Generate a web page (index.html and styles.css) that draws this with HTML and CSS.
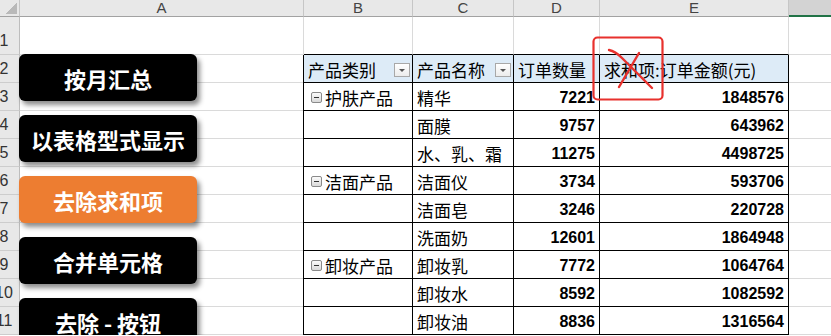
FILE: index.html
```html
<!DOCTYPE html>
<html lang="zh-CN">
<head>
<meta charset="utf-8">
<title>数据透视表</title>
<link rel="stylesheet" href="styles.css">
</head>
<body>
<div class="sheet">
  <!-- column headers -->
  <div class="ch corner"></div>
  <div class="ch">A</div>
  <div class="ch">B</div>
  <div class="ch">C</div>
  <div class="ch">D</div>
  <div class="ch">E</div>
  <div class="ch sel"></div>

  <!-- row 1 -->
  <div class="rh">1</div>
  <div class="c"></div>
  <div class="c tt"></div>
  <div class="c tt"></div>
  <div class="c tt"></div>
  <div class="c tt"></div>
  <div class="c"></div>

  <!-- button stack over column A, rows 2-11 -->
  <div class="btns">
    <div class="btn">按月汇总</div>
    <div class="btn">以表格型式显示</div>
    <div class="btn orange">去除求和项</div>
    <div class="btn">合并单元格</div>
    <div class="btn">去除 - 按钮</div>
  </div>

  <!-- row 2 : pivot header -->
  <div class="rh">2</div>
  <div class="t hd drop"><span>产品类别</span><span class="dd"></span></div>
  <div class="t hd drop"><span>产品名称</span><span class="dd"></span></div>
  <div class="t hd">订单数量</div>
  <div class="t hd mark-cell">求和项:订单金额(元)
    <svg class="mark" width="72" height="66" viewBox="0 0 72 66">
      <rect x="1.5" y="1.5" width="69" height="62" rx="4" fill="none" stroke="#e8312d" stroke-width="2.2"/>
      <path d="M17 14 C22 15 26 18 30 22 L60 52" fill="none" stroke="#e8312d" stroke-width="2.4" stroke-linecap="round"/>
      <path d="M47 17 L27 51" fill="none" stroke="#e8312d" stroke-width="2.4" stroke-linecap="round"/>
    </svg>
  </div>
  <div class="c"></div>

  <!-- row 3 -->
  <div class="rh">3</div>
  <div class="t grp"><span class="mb"></span>护肤产品</div>
  <div class="t">精华</div>
  <div class="t num">7221</div>
  <div class="t num">1848576</div>
  <div class="c"></div>

  <!-- row 4 -->
  <div class="rh">4</div>
  <div class="t"></div>
  <div class="t">面膜</div>
  <div class="t num">9757</div>
  <div class="t num">643962</div>
  <div class="c"></div>

  <!-- row 5 -->
  <div class="rh">5</div>
  <div class="t"></div>
  <div class="t">水、乳、霜</div>
  <div class="t num">11275</div>
  <div class="t num">4498725</div>
  <div class="c"></div>

  <!-- row 6 -->
  <div class="rh">6</div>
  <div class="t grp"><span class="mb"></span>洁面产品</div>
  <div class="t">洁面仪</div>
  <div class="t num">3734</div>
  <div class="t num">593706</div>
  <div class="c"></div>

  <!-- row 7 -->
  <div class="rh">7</div>
  <div class="t"></div>
  <div class="t">洁面皂</div>
  <div class="t num">3246</div>
  <div class="t num">220728</div>
  <div class="c"></div>

  <!-- row 8 -->
  <div class="rh">8</div>
  <div class="t"></div>
  <div class="t">洗面奶</div>
  <div class="t num">12601</div>
  <div class="t num">1864948</div>
  <div class="c"></div>

  <!-- row 9 -->
  <div class="rh">9</div>
  <div class="t grp"><span class="mb"></span>卸妆产品</div>
  <div class="t">卸妆乳</div>
  <div class="t num">7772</div>
  <div class="t num">1064764</div>
  <div class="c"></div>

  <!-- row 10 -->
  <div class="rh">10</div>
  <div class="t"></div>
  <div class="t">卸妆水</div>
  <div class="t num">8592</div>
  <div class="t num">1082592</div>
  <div class="c"></div>

  <!-- row 11 -->
  <div class="rh">11</div>
  <div class="t"></div>
  <div class="t">卸妆油</div>
  <div class="t num">8836</div>
  <div class="t num">1316564</div>
  <div class="c"></div>
</div>
</body>
</html>
```

FILE: styles.css
```css
html, body {
  margin: 0;
  padding: 0;
  overflow: hidden;
  background: #fff;
}

* { box-sizing: border-box; }

.sheet {
  display: grid;
  grid-template-columns: 31px 284px 109px 101px 86px 189px 80px;
  grid-template-rows: 17px 38px repeat(10, 28px);
  margin-left: -11px;
  font-family: "Noto Sans CJK SC", "Noto Sans", sans-serif;
  color: #000;
}

/* column headers */
.ch {
  background: #e8e8e8;
  border-right: 1px solid #c6c6c6;
  border-bottom: 1px solid #a2a2a2;
  display: flex;
  align-items: center;
  justify-content: center;
  font: 15px/16px "Liberation Sans", sans-serif;
  color: #444;
}

.ch.corner {
  background: linear-gradient(to top left, #b9b9b9 50%, transparent 50%) right 2px bottom 2px / 12px 12px no-repeat, #e8e8e8;
}

.ch.sel {
  background: #d3d3d3;
  border-bottom: 2px solid #217346;
}

/* row headers */
.rh {
  background: #e8e8e8;
  border-right: 1px solid #bdbdbd;
  border-bottom: 1px solid #cdcdcd;
  display: flex;
  align-items: flex-end;
  justify-content: center;
  padding-bottom: 4px;
  font: 16px/18px "Liberation Sans", sans-serif;
  color: #333;
}

/* plain worksheet cells */
.c {
  border-right: 1px solid #dadada;
  border-bottom: 1px solid #dadada;
}

.c.tt {
  border-bottom-color: #000;
}

/* pivot table cells */
.t {
  border-right: 1px solid #000;
  border-bottom: 1px solid #000;
  display: flex;
  align-items: flex-end;
  padding: 0 4px 2px 4px;
  font-size: 17px;
  line-height: 20px;
  white-space: nowrap;
}

.t.hd {
  background: #ddebf7;
}

.t.drop {
  justify-content: space-between;
}

.dd {
  width: 16px;
  height: 14px;
  margin: 0 -2px 3px 0;
  border: 1px solid #a8a8a8;
  background: linear-gradient(#ffffff, #ececec);
  display: flex;
  align-items: center;
  justify-content: center;
}

.dd::after {
  content: "";
  border-left: 3px solid transparent;
  border-right: 3px solid transparent;
  border-top: 3px solid #555;
  margin-top: 1px;
}

.t.grp {
  padding-left: 7px;
}

.mb {
  width: 11px;
  height: 11px;
  margin: 0 3px 5px 0;
  border: 1px solid #8a8a8a;
  border-radius: 2px;
  background: linear-gradient(#fbfbfb, #d9d9d9);
  display: flex;
  align-items: center;
  justify-content: center;
  flex: none;
}

.mb::after {
  content: "";
  width: 5px;
  height: 1px;
  background: #333;
}

.t.num {
  justify-content: flex-end;
  font: bold 16px/20px "Liberation Sans", sans-serif;
  padding-right: 4px;
}

.mark-cell {
  position: relative;
}

.mark {
  position: absolute;
  left: -8px;
  top: -19px;
  z-index: 2;
}

/* button stack */
.btns {
  grid-column: 2;
  grid-row: 3 / 13;
  border-right: 1px solid #000;
  background: repeating-linear-gradient(to bottom, transparent 0, transparent 27px, #dadada 27px, #dadada 28px);
  display: flex;
  flex-direction: column;
  gap: 14px;
  z-index: 1;
}

.btn {
  flex: none;
  width: 178px;
  height: 47px;
  margin-left: -1px;
  border-radius: 6px;
  background: #000;
  color: #fff;
  box-shadow: 3px 4px 5px rgba(0, 0, 0, 0.45);
  display: flex;
  align-items: center;
  justify-content: center;
  font: 700 22px/1 "Noto Sans CJK SC", sans-serif;
}

.btn:first-child {
  margin-top: -1px;
}

.btn.orange {
  background: #ed7d31;
}
```
